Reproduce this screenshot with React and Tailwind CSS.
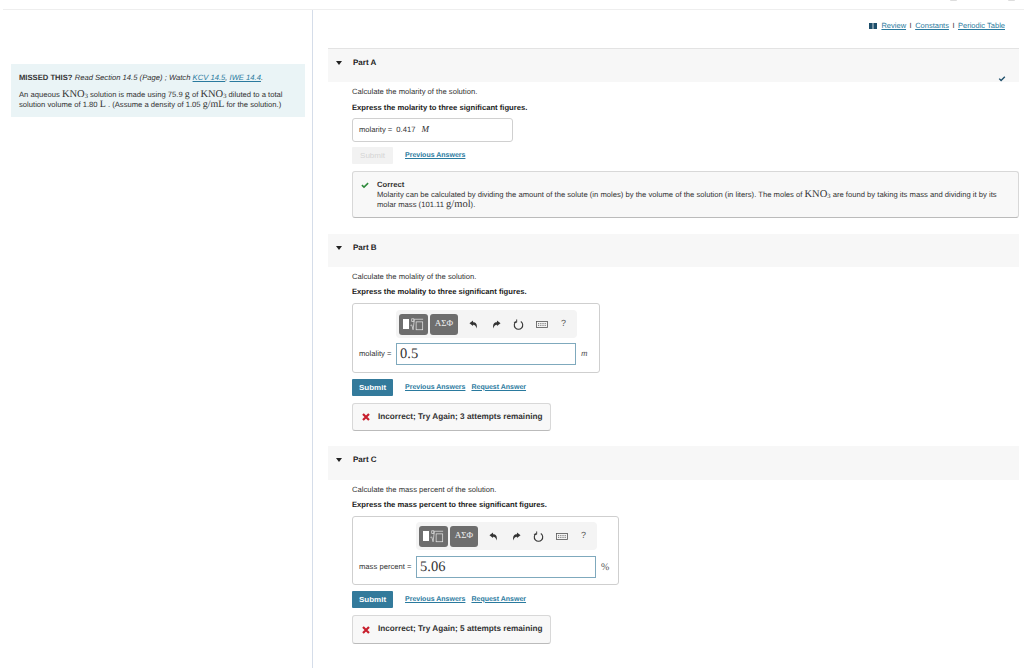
import React from "react";

const Serif = ({ children, className = "" }) => (
  <span className={`font-['Liberation_Serif',serif] ${className}`}>{children}</span>
);

const Kno3 = () => (
  <Serif className="text-[10.5px]">
    KNO<sub className="text-[6.5px] align-baseline relative top-[1px]">3</sub>
  </Serif>
);

const CheckMark = ({ className }) => (
  <svg viewBox="0 0 12 10" className={className} fill="currentColor">
    <path d="M0.5 5.2 2.2 3.6 4.5 5.8 9.9 0.6 11.5 2.2 4.5 9.2Z" />
  </svg>
);

const BookIcon = () => (
  <svg viewBox="0 0 8 6" className="w-[8px] h-[6px] text-[#1e4f6b]" fill="currentColor">
    <rect x="0" y="0" width="3.6" height="6" />
    <rect x="4.4" y="0" width="3.6" height="6" />
  </svg>
);

const PartHeader = ({ title, done, first, height }) => (
  <div className={`ml-[15px] mr-[5px] ${height} bg-[#f7f7f7] flex items-center relative ${first ? "border-t border-[#e3e3e3]" : ""}`}>
    <svg viewBox="0 0 6 4" className="w-[6px] h-[4px] ml-[8px] -mt-[6px] text-[#222]" fill="currentColor">
      <path d="M0 0H6L3 4Z" />
    </svg>
    <span className="ml-[11px] text-[8px] font-bold text-[#222] -mt-[6px]">{title}</span>
    {done && <CheckMark className="absolute right-[13px] bottom-0 w-[8px] h-[6px] text-[#1e4f6b]" />}
  </div>
);

const Prompt = ({ text, bold, gap }) => (
  <div className="pt-[5px]">
    <p className="text-[7.65px] leading-[10px] text-[#333]">{text}</p>
    <p className={`${gap} text-[7.65px] leading-[10px] font-bold text-[#222]`}>{bold}</p>
  </div>
);

const LinkText = ({ children }) => (
  <a className="text-[7px] font-bold text-[#2a7a9e] underline">{children}</a>
);

const Toolbar = () => (
  <div className="w-[181px] h-[28px] bg-[#f4f4f4] rounded-[4px] flex items-center pl-[3px]">
    <div className="w-[29px] h-[21px] bg-[#6e6e6e] rounded-[3px] flex items-center justify-center gap-[1px]">
      <span className="w-[6px] h-[10px] bg-white" />
      <svg viewBox="0 0 16 14" className="w-[14px] h-[13px] text-[#e8e8e8]" fill="none" stroke="currentColor" strokeWidth="0.8">
        <path d="M0.5 8 2 7.5 3.5 13 5 1H15" />
        <rect x="7" y="4" width="7.5" height="9" />
        <rect x="2" y="0.5" width="2.4" height="3" />
      </svg>
    </div>
    <div className="ml-[2px] w-[28px] h-[21px] bg-[#6e6e6e] rounded-[3px] flex items-center justify-center">
      <Serif className="text-[9px] text-[#eee]">ΑΣΦ</Serif>
    </div>
    <svg viewBox="0 0 10 10" className="ml-[11px] w-[9px] h-[9px] text-[#333]" fill="currentColor">
      <path d="M0.5 3.5 4.5 0.5V2.5C7.5 2.5 9.5 4.5 8.5 9.5 8 7 6.5 5.3 4.5 5.3V6.8Z" />
    </svg>
    <svg viewBox="0 0 10 10" className="ml-[14px] w-[9px] h-[9px] text-[#333]" fill="currentColor">
      <path d="M9.5 3.5 5.5 0.5V2.5C2.5 2.5 0.5 4.5 1.5 9.5 2 7 3.5 5.3 5.5 5.3V6.8Z" />
    </svg>
    <svg viewBox="0 0 12 12" className="ml-[12px] w-[11px] h-[11px] text-[#333]" fill="none" stroke="currentColor" strokeWidth="1.2">
      <path d="M3.5 2.8A4.6 4.6 0 1 0 8.5 2.8" />
      <path d="M4 0.5V3.6H1" strokeWidth="1" />
    </svg>
    <svg viewBox="0 0 12 7" className="ml-[12px] w-[12px] h-[7px] text-[#555]" fill="none" stroke="currentColor" strokeWidth="0.8">
      <rect x="0.5" y="0.5" width="11" height="6" />
      <path d="M2 2.6H10M2 4.4H10" strokeDasharray="1 0.8" />
    </svg>
    <span className="ml-[13px] text-[9px] text-[#555]">?</span>
  </div>
);

const AnswerEditor = ({ box, label, labelWidth, value, unit, unitClass, toolbarLeft, inputGap }) => (
  <div className={`${box} border border-[#cfcfcf] rounded-[3px] pl-[6px]`}>
    <div className={toolbarLeft}>
      <Toolbar />
    </div>
    <div className={`${inputGap} flex items-center`}>
      <span className={`${labelWidth} text-[7.65px] text-[#333] whitespace-nowrap`}>{label}</span>
      <div className="w-[180px] h-[22px] border border-[#7fa9bd] flex items-center pl-[3px] pt-[2px]">
        <Serif className="text-[14.5px] text-[#333]">{value}</Serif>
      </div>
      <span className={`ml-[5px] text-[#555] ${unitClass}`}>{unit}</span>
    </div>
  </div>
);

const SubmitRow = ({ disabled, request, top }) => (
  <div className={`${top} flex items-center`}>
    <button
      className={`w-[41px] h-[17px] text-[8px] rounded-[1px] ${
        disabled ? "bg-[#f2f2f2] text-[#d5d5d5]" : "bg-[#337a9b] text-white font-bold"
      }`}
    >
      Submit
    </button>
    <span className="ml-[12px] mt-[1px] flex gap-[6px]">
      <LinkText>Previous Answers</LinkText>
      {request && <LinkText>Request Answer</LinkText>}
    </span>
  </div>
);

const IncorrectBox = ({ attempts, top, height }) => (
  <div className={`${top} ${height} w-[199px] bg-[#f8f8f8] border border-[#d8d8d8] border-b-[#bbb] rounded-[3px] flex items-center pl-[9px]`}>
    <svg viewBox="0 0 8 8" className="w-[8px] h-[8px] text-[#c8202e]" fill="none" stroke="currentColor" strokeWidth="2.2">
      <path d="M1 1 7 7M7 1 1 7" />
    </svg>
    <span className="ml-[8px] text-[8.2px] font-bold text-[#333]">Incorrect; Try Again; {attempts} attempts remaining</span>
  </div>
);

export default function App() {
  return (
    <div className="h-[668px] w-[1024px] overflow-hidden bg-white font-['Liberation_Sans',Arial,sans-serif] [text-rendering:geometricPrecision] flex flex-col">
      <div className="h-[9px] ml-[3px] border-b border-[#eeeeee] box-content flex justify-end gap-[51px] pr-[9px]">
        <span className="w-[7px] h-[1px] bg-[#dddddd] rounded-b-full" />
        <span className="w-[7px] h-[1px] bg-[#dddddd] rounded-b-full" />
      </div>
      <div className="flex flex-1">
        {/* Left column */}
        <div className="w-[313px] shrink-0 border-r border-[#d5dde9] pl-[11px] pr-[7px] pt-[54px]">
          <div className="h-[53px] bg-[#eaf4f6] px-[8px] pt-[9px]">
            <p className="text-[7.65px] leading-[10px] text-[#333]">
              <b>MISSED THIS?</b>{" "}
              <i>
                Read Section 14.5 (Page) ; Watch <a className="text-[#2a7a9e] underline">KCV 14.5</a>,{" "}
                <a className="text-[#2a7a9e] underline">IWE 14.4</a>.
              </i>
            </p>
            <p className="mt-[7px] text-[7.65px] leading-[10px] text-[#333]">
              An aqueous <Kno3 /> solution is made using 75.9 <Serif className="text-[10px]">g</Serif> of <Kno3 /> diluted to a total
              <br />
              solution volume of 1.80 <Serif className="text-[10px]">L</Serif> . (Assume a density of 1.05{" "}
              <Serif className="text-[10px]">g/mL</Serif> for the solution.)
            </p>
          </div>
        </div>

        {/* Right column */}
        <div className="flex-1 min-w-0">
          <div className="h-[38px] pt-[11px] pr-[19px] flex justify-end items-start gap-[3.5px] text-[7.5px] leading-[10px] text-[#2a7a9e]">
            <span className="mt-[2px] mr-[1px]"><BookIcon /></span>
            <a className="underline">Review</a>
            <span className="text-[#333]">I</span>
            <a className="underline">Constants</a>
            <span className="text-[#333]">I</span>
            <a className="underline">Periodic Table</a>
          </div>

          <PartHeader title="Part A" done first height="h-[34px]" />
          <div className="pl-[39px] pr-[5px]">
            <Prompt
              gap="mt-[6px]"
              text="Calculate the molarity of the solution."
              bold="Express the molarity to three significant figures."
            />
            <div className="mt-[5px] w-[161px] h-[24px] border border-[#d0d0d0] rounded-[3px] flex items-center pl-[6px] text-[7.65px] text-[#333]">
              molarity = <span className="ml-[4px]">0.417</span>
              <Serif className="ml-[6px] italic text-[9px]">M</Serif>
            </div>
            <SubmitRow disabled top="mt-[5px]" />
            <div className="mt-[7px] h-[47px] bg-[#f8f8f8] border border-[#d8d8d8] border-b-[#bbb] rounded-[3px] flex pl-[8px] pt-[8px]">
              <CheckMark className="w-[8px] h-[7px] mt-[2px] text-[#2f8a3c] shrink-0" />
              <div className="ml-[8px] text-[7.65px] leading-[10px] text-[#333]">
                <p className="font-bold">Correct</p>
                <p>
                  Molarity can be calculated by dividing the amount of the solute (in moles) by the volume of the solution (in liters). The moles of <Kno3 /> are found by taking its mass and dividing it by its
                  <br />
                  molar mass (101.11 <Serif className="text-[10.5px]">g/mol</Serif>).
                </p>
              </div>
            </div>
          </div>

          <div className="h-[16px]" />
          <PartHeader title="Part B" height="h-[33px]" />
          <div className="pl-[39px] pr-[5px]">
            <Prompt
              gap="mt-[5px]"
              text="Calculate the molality of the solution."
              bold="Express the molality to three significant figures."
            />
            <div className="mt-[6px]">
              <AnswerEditor
                box="w-[248px] h-[70px] pt-[6px]"
                label="molality ="
                labelWidth="w-[37px]"
                value="0.5"
                unit="m"
                unitClass="font-['Liberation_Serif',serif] italic text-[9px]"
                toolbarLeft="ml-[37px]"
                inputGap="mt-[5px]"
              />
            </div>
            <SubmitRow request top="mt-[6px]" />
            <IncorrectBox attempts={3} top="mt-[7px]" height="h-[28px]" />
          </div>

          <div className="h-[15px]" />
          <PartHeader title="Part C" height="h-[34px]" />
          <div className="pl-[39px] pr-[5px]">
            <Prompt
              gap="mt-[5px]"
              text="Calculate the mass percent of the solution."
              bold="Express the mass percent to three significant figures."
            />
            <div className="mt-[6px]">
              <AnswerEditor
                box="w-[267px] h-[69px] pt-[5px]"
                label="mass percent ="
                labelWidth="w-[57px]"
                value="5.06"
                unit="%"
                unitClass="font-['Liberation_Serif',serif] text-[10px]"
                toolbarLeft="ml-[57px]"
                inputGap="mt-[6px]"
              />
            </div>
            <SubmitRow request top="mt-[6px]" />
            <IncorrectBox attempts={5} top="mt-[7px]" height="h-[29px]" />
          </div>
        </div>
      </div>
    </div>
  );
}
